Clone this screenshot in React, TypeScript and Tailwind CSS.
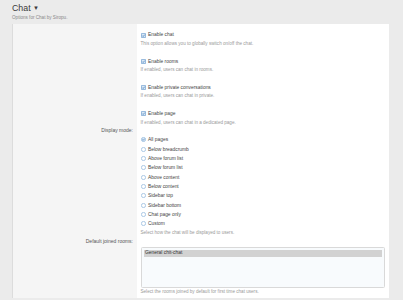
import type { ReactNode } from "react";

const toggles = [
  { label: "Enable chat", hint: "This option allows you to globally switch on/off the chat." },
  { label: "Enable rooms", hint: "If enabled, users can chat in rooms." },
  { label: "Enable private conversations", hint: "If enabled, users can chat in private." },
  { label: "Enable page", hint: "If enabled, users can chat in a dedicated page." },
];

const modes = [
  "All pages",
  "Below breadcrumb",
  "Above forum list",
  "Below forum list",
  "Above content",
  "Below content",
  "Sidebar top",
  "Sidebar bottom",
  "Chat page only",
  "Custom",
];

const CheckBox = () => (
  <svg width="5" height="5" viewBox="0 0 10 10" className="shrink-0">
    <rect x="0.75" y="0.75" width="8.5" height="8.5" rx="1" fill="#dce9f5" stroke="#6f9fcf" strokeWidth="1.5" />
    <path d="M2.5 5.2 L4.3 7 L7.6 3.2" fill="none" stroke="#3f7dbd" strokeWidth="1.5" />
  </svg>
);

const Radio = ({ checked }: { checked?: boolean }) => (
  <svg width="5" height="5" viewBox="0 0 10 10" className="shrink-0">
    <circle cx="5" cy="5" r="4.2" fill={checked ? "#dce9f5" : "#ffffff"} stroke="#8ab3da" strokeWidth="1.4" />
    {checked && <path d="M2.8 5.2 L4.4 6.7 L7.3 3.5" fill="none" stroke="#3f7dbd" strokeWidth="1.4" />}
  </svg>
);

const Row = ({ label, children }: { label?: string; children: ReactNode }) => (
  <div className="grid grid-cols-[124px_1fr]">
    <div className="bg-[#f5f5f5] pr-[4px] text-right text-[5px] text-[#555]">{label}</div>
    <div className="bg-white pl-[3.5px] pr-[4px]">{children}</div>
  </div>
);

export default function App() {
  return (
    <div className="h-[300px] w-[403px] overflow-hidden bg-[#ebebeb] pl-[12px] font-['Liberation_Sans',Arial,sans-serif]">
      <div className="pt-[3px]">
        <h1 className="flex items-center gap-[2.5px] text-[8.8px] leading-[10px] text-[#3a3a3a]">
          Chat
          <span className="text-[6px] leading-none">▼</span>
        </h1>
        <p className="mt-[2px] text-[4.6px] leading-[6px] text-[#8a8a8a]">Options for Chat by Siropu.</p>
      </div>

      <div className="mt-[3px] w-[377px] border-l border-[#dcdcdc]">
        <Row>
          <div className="pt-[6.5px]">
            {toggles.map((t) => (
              <div key={t.label} className="mb-[8.33px] last:mb-0">
                <div className="flex h-[9px] items-center gap-[2.5px] text-[4.9px] text-[#444]">
                  <CheckBox />
                  {t.label}
                </div>
                <div className="flex h-[9px] items-center text-[4.6px] text-[#9a9a9a]">{t.hint}</div>
              </div>
            ))}
          </div>
        </Row>

        <Row label="Display mode:">
          <div className="pt-[7.8px]">
            {modes.map((m, i) => (
              <div key={m} className="flex h-[9.33px] items-center gap-[2.5px] text-[4.9px] text-[#444]">
                <Radio checked={i === 0} />
                {m}
              </div>
            ))}
            <div className="flex h-[9.5px] items-center text-[4.6px] text-[#9a9a9a]">
              Select how the chat will be displayed to users.
            </div>
          </div>
        </Row>

        <Row label="Default joined rooms:">
          <div className="pt-[8.5px]">
            <div className="h-[41px] rounded-[1.5px] border border-[#d9d9d9] bg-[#f8fbfd] p-[2px]">
              <div className="flex h-[7px] items-center bg-[#d2d2d2] pl-[1.5px] text-[4.9px] text-[#333]">
                General chit-chat
              </div>
            </div>
            <div className="flex h-[10px] items-center text-[4.6px] text-[#9a9a9a]">
              Select the rooms joined by default for first time chat users.
            </div>
          </div>
        </Row>
      </div>
    </div>
  );
}
